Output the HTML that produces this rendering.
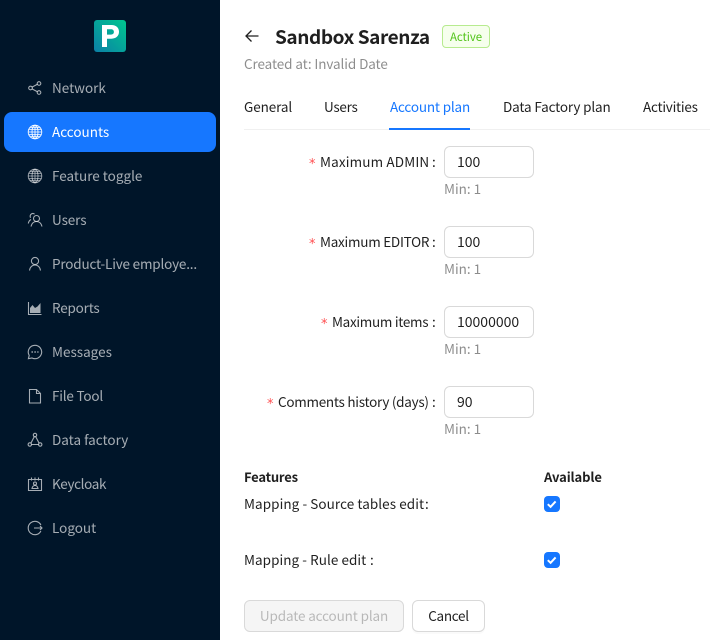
<!DOCTYPE html>
<html><head><meta charset="utf-8"><style>
*{box-sizing:border-box}
html,body{margin:0;padding:0;width:710px;height:640px;overflow:hidden;background:#fff;font-family:"Noto Sans CJK JP","Liberation Sans",sans-serif;font-size:13.5px;color:rgba(0,0,0,.88)}
.t{position:absolute;white-space:nowrap;line-height:20px}
#side{position:absolute;left:0;top:0;width:220px;height:640px;background:#001529}
.m{position:absolute;left:52px;white-space:nowrap;line-height:20px;color:rgba(255,255,255,.65)}
.ic{position:absolute;left:27px;width:16px;height:16px;fill:none;stroke:rgba(255,255,255,.65);stroke-width:1.1}
.gl{stroke-width:.85}
.s{position:absolute;color:#ff4d4f;font-family:"DejaVu Sans",sans-serif;font-size:13px;line-height:22px}
.inp{position:absolute;left:444px;width:90px;height:32px;border:1px solid #d9d9d9;border-radius:6px;padding-left:12px;line-height:30px;background:#fff;font-size:14px}
.h{position:absolute;left:444px;color:rgba(0,0,0,.45);line-height:20px}
.cb{position:absolute;left:544px;width:16px;height:16px;border-radius:4px;background:#1677ff}
.cb svg{position:absolute;left:0;top:0}
</style></head><body>
<div id="side">
<svg style="position:absolute;left:94px;top:20px" width="32" height="32" viewBox="0 0 32 32"><defs><linearGradient id="g" x1="0" y1="1" x2="1" y2="0"><stop offset="0" stop-color="#0b7fa6"/><stop offset="1" stop-color="#00c78f"/></linearGradient></defs><rect width="32" height="32" rx="3" fill="url(#g)"/><path fill-rule="evenodd" fill="#fff" d="M8 5h9.500c4.600 0 7.500 2.700 7.500 6.800 0 4.200-3 6.900-7.600 6.900H13V27H8zM13 9.200v5.400h3.900c1.900 0 3-1 3-2.700 0-1.700-1.100-2.700-3-2.700z"/></svg>
<div style="position:absolute;left:4px;top:112px;width:212px;height:40px;background:#1677ff;border-radius:8px"></div>
<svg class="ic" style="top:80px" viewBox="0 0 16 16"><circle cx="3.500" cy="8" r="1.800"/><circle cx="12" cy="3.500" r="1.800"/><circle cx="12" cy="12.500" r="1.800"/><path d="M5 7.100l5.400-2.800M5 8.900l5.400 2.800"/></svg>
<div class="m" style="top:77px">Network</div>
<svg class="ic gl" style="top:124px;stroke:#fff" viewBox="0 0 16 16"><circle cx="8" cy="8" r="6.800"/><ellipse cx="8" cy="8" rx="3" ry="6.800"/><path d="M1.800 5.300h12.400M1.800 10.700h12.400M8 1.200v13.600M1.200 8h13.600M3 3.300h10M3 12.700h10"/></svg>
<div class="m" style="top:121px;color:#fff">Accounts</div>
<svg class="ic gl" style="top:168px" viewBox="0 0 16 16"><circle cx="8" cy="8" r="6.800"/><ellipse cx="8" cy="8" rx="3" ry="6.800"/><path d="M1.800 5.300h12.400M1.800 10.700h12.400M8 1.200v13.600M1.200 8h13.600M3 3.300h10M3 12.700h10"/></svg>
<div class="m" style="top:165px">Feature toggle</div>
<svg class="ic" style="top:212px" viewBox="0 0 16 16"><circle cx="9.500" cy="6.500" r="3"/><path d="M4 14.500c.5-3 2.700-5 5.500-5s5 2 5.500 5M7.500 2.200c-.7-.7-2-.9-3-.3-1.400.8-1.700 2.500-.9 3.800M4 7.500c-1.500.8-2.400 2.300-2.700 4"/></svg>
<div class="m" style="top:209px;letter-spacing:-.1px">Users</div>
<svg class="ic" style="top:256px" viewBox="0 0 16 16"><circle cx="8" cy="5" r="3.600"/><path d="M2.500 14.500c.4-3.300 2.600-5.500 5.500-5.500s5.100 2.200 5.500 5.500"/></svg>
<div class="m" style="top:253px;letter-spacing:-.18px">Product-Live employe...</div>
<svg class="ic" style="top:300px" viewBox="0 0 16 16"><path d="M1.500 2v12.500h13"/><path fill="rgba(255,255,255,.65)" stroke="none" d="M3 13V8l2.500-3 2.500 3 2.500-1.500L13.500 3v10z"/></svg>
<div class="m" style="top:297px;letter-spacing:-.2px">Reports</div>
<svg class="ic" style="top:344px" viewBox="0 0 16 16"><path d="M8 1.300a6.700 6.700 0 1 1-3 12.700l-3.600.7.800-3.300A6.700 6.700 0 0 1 8 1.300z"/><path stroke-width="1.400" stroke-dasharray="1.400 1.500" d="M4.500 8h7"/></svg>
<div class="m" style="top:341px">Messages</div>
<svg class="ic" style="top:388px" viewBox="0 0 16 16"><path d="M2.500 1.500h7l4 4v9.500h-11zM9.500 1.500v4h4"/></svg>
<div class="m" style="top:385px;letter-spacing:-.2px">File Tool</div>
<svg class="ic" style="top:432px" viewBox="0 0 16 16"><circle cx="8" cy="3" r="1.700"/><circle cx="2.800" cy="12.500" r="1.700"/><circle cx="13.200" cy="12.500" r="1.700"/><path d="M7.300 4.600L4 11M8.700 4.600L12 11M4.500 12.500h7"/></svg>
<div class="m" style="top:429px">Data factory</div>
<svg class="ic" style="top:476px" viewBox="0 0 16 16"><path d="M1.500 3.500h13v11h-13zM4.500 1.500v3M11.500 1.500v3M8 1.500v3"/><circle cx="8" cy="7.500" r="1.500"/><path d="M5 12.500c.4-2 1.500-3 3-3s2.600 1 3 3z"/></svg>
<div class="m" style="top:473px;letter-spacing:-.35px">Keycloak</div>
<svg class="ic" style="top:520px" viewBox="0 0 16 16"><path d="M13.900 5A6.700 6.700 0 1 0 13.900 11M7 8h8M13 6l2 2-2 2"/></svg>
<div class="m" style="top:517px">Logout</div>
</div>

<svg style="position:absolute;left:244px;top:28px" width="16" height="16" viewBox="0 0 16 16" fill="none" stroke="rgba(0,0,0,.88)" stroke-width="1.300"><path d="M14.500 8H2M7.500 2.500L2 8l5.500 5.500"/></svg>
<div class="t" style="left:275px;top:24px;font-size:19px;line-height:26px;font-weight:700;letter-spacing:-.42px">Sandbox Sarenza</div>
<div style="position:absolute;left:442px;top:25px;width:48px;height:23px;border:1px solid #b7eb8f;background:#f6ffed;border-radius:4px;color:#52c41a;font-size:11.5px;line-height:23px;text-align:center;letter-spacing:-.1px">Active</div>
<div class="t" style="left:244px;top:53px;color:rgba(0,0,0,.45);letter-spacing:-.1px">Created at: Invalid Date</div>

<div style="position:absolute;left:244px;top:129px;width:466px;height:1px;background:#f0f0f0"></div>
<div class="t" style="left:244px;top:96px;letter-spacing:-.1px">General</div>
<div class="t" style="left:324px;top:96px;letter-spacing:-.3px">Users</div>
<div class="t" style="left:390px;top:96px;color:#1677ff;letter-spacing:-.17px">Account plan</div>
<div style="position:absolute;left:389px;top:128px;width:81px;height:2px;background:#1677ff"></div>
<div class="t" style="left:503px;top:96px;letter-spacing:-.15px">Data Factory plan</div>
<div class="t" style="left:643px;top:96px;letter-spacing:-.24px">Activities</div>

<div class="s" style="left:309px;top:154px">*</div>
<div class="t" style="left:320px;top:151px;letter-spacing:.15px">Maximum ADMIN</div>
<div class="t" style="left:432px;top:151px">:</div>
<div class="inp" style="top:146px">100</div>
<div class="h" style="top:178px">Min: 1</div>
<div class="s" style="left:309px;top:234px">*</div>
<div class="t" style="left:320px;top:231px;letter-spacing:-.25px">Maximum EDITOR</div>
<div class="t" style="left:432px;top:231px">:</div>
<div class="inp" style="top:226px">100</div>
<div class="h" style="top:258px">Min: 1</div>
<div class="s" style="left:321px;top:314px">*</div>
<div class="t" style="left:332px;top:311px;letter-spacing:-.3px">Maximum items</div>
<div class="t" style="left:432px;top:311px">:</div>
<div class="inp" style="top:306px">10000000</div>
<div class="h" style="top:338px">Min: 1</div>
<div class="s" style="left:267px;top:394px">*</div>
<div class="t" style="left:278px;top:391px;letter-spacing:-.27px">Comments history (days)</div>
<div class="t" style="left:432px;top:391px">:</div>
<div class="inp" style="top:386px">90</div>
<div class="h" style="top:418px">Min: 1</div>

<div class="t" style="left:244px;top:467px;font-size:13px;font-weight:700;letter-spacing:-.2px">Features</div>
<div class="t" style="left:544px;top:467px;font-size:13px;font-weight:700;letter-spacing:-.1px">Available</div>
<div class="t" style="left:244px;top:493px;letter-spacing:.07px">Mapping - Source tables edit</div>
<div class="t" style="left:425px;top:493px">:</div>
<div class="cb" style="top:496px"><svg width="16" height="16" viewBox="0 0 16 16" fill="none" stroke="#fff" stroke-width="2"><path d="M3.800 8.200l2.800 2.600 5-5.400"/></svg></div>
<div class="t" style="left:244px;top:549px;letter-spacing:.05px">Mapping - Rule edit</div>
<div class="t" style="left:370px;top:549px">:</div>
<div class="cb" style="top:552px"><svg width="16" height="16" viewBox="0 0 16 16" fill="none" stroke="#fff" stroke-width="2"><path d="M3.800 8.200l2.800 2.600 5-5.400"/></svg></div>

<div style="position:absolute;left:244px;top:600px;width:160px;height:32px;background:rgba(0,0,0,.04);border:1px solid #d9d9d9;border-radius:6px;color:rgba(0,0,0,.25);text-align:center;line-height:28px;letter-spacing:-.13px">Update account plan</div>
<div style="position:absolute;left:412px;top:600px;width:73px;height:32px;background:#fff;border:1px solid #d9d9d9;border-radius:6px;text-align:center;line-height:28px;box-shadow:0 2px 0 rgba(0,0,0,.02);letter-spacing:-.3px">Cancel</div>
</body></html>
